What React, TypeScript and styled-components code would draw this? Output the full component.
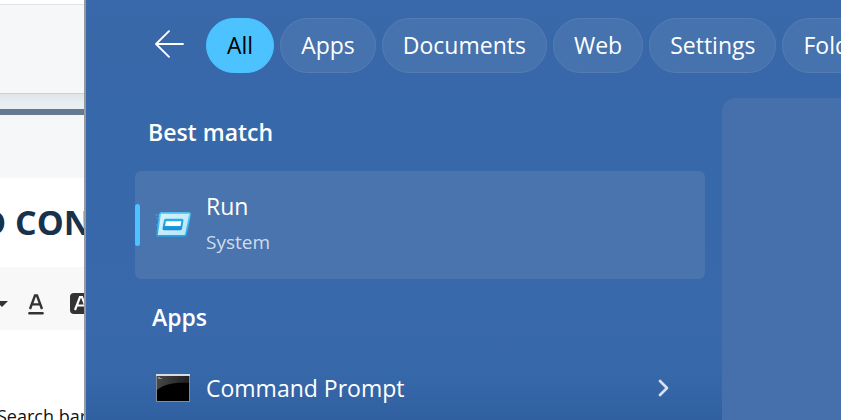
import React from "react";
import styled, { createGlobalStyle } from "styled-components";

const GlobalStyle = createGlobalStyle`
  * { box-sizing: border-box; }
  html, body, #root { height: 100%; }
  body {
    margin: 0;
    overflow: hidden;
    background: #fff;
    font-family: "Open Sans", "Noto Sans", sans-serif;
  }
  button { font: inherit; color: inherit; border: 0; background: none; padding: 0; }
  h1, h2, p { margin: 0; }
`;

const Screen = styled.div`
  display: grid;
  grid-template-columns: 86px minmax(0, 1fr);
  height: 100%;
  min-height: 420px;
  overflow: hidden;
`;

const Page = styled.main`
  display: flex;
  flex-direction: column;
  overflow: hidden;
  border-right: 2px solid #949a9e;
  background: #fff;
  white-space: nowrap;
`;

const PageHeader = styled.div`
  flex: none;
  height: 90px;
  margin-top: 4px;
  border-top: 1px solid #dde3e9;
  border-bottom: 1px solid #cbd3da;
  background: #f5f7f9;
`;

const Divider = styled.div`
  flex: none;
  height: 21px;
  border-bottom: 6px solid #637a90;
  background: linear-gradient(#dfe4e9, #e9eef3 60%);
`;

const PageBand = styled.div`
  flex: none;
  height: 63px;
  background: #f5f7f9;
`;

const PageTitle = styled.h1`
  flex: none;
  padding: 20px 0;
  margin-left: -19px;
  color: #17324a;
  font-size: 34px;
  line-height: 49px;
  font-weight: 700;
`;

const Toolbar = styled.div`
  display: flex;
  flex: none;
  align-items: center;
  gap: 20px;
  height: 63px;
  padding-top: 10px;
  background: #f8f8f8;
`;

const ToolButton = styled.button<{ $width: number }>`
  display: flex;
  flex: none;
  width: ${(p) => p.$width}px;
`;

const PageText = styled.p`
  padding-top: 71px;
  margin-left: -3px;
  color: #111;
  font-size: 18px;
  line-height: 30px;
`;

const SearchPanel = styled.section`
  display: flex;
  flex-direction: column;
  gap: 25px;
  min-width: 0;
  padding-top: 18px;
  overflow: hidden;
  color: #fff;
  background: linear-gradient(#3a68aa, #3768a9 35%, #3969aa 78%, #3667a9 90%, #3060a0);
`;

const FilterBar = styled.nav`
  display: flex;
  flex: none;
  align-items: center;
  gap: 6px;
  padding-left: 68px;
`;

const BackButton = styled.button`
  display: flex;
  margin-right: 15px;
  padding-bottom: 3px;
`;

const Filter = styled.button<{ $active?: boolean }>`
  flex: none;
  height: 55px;
  padding: 0 20px 2px;
  border: 1px solid ${(p) => (p.$active ? "#4cc2ff" : "#557db5")};
  border-radius: 28px;
  color: ${(p) => (p.$active ? "#000" : "#fff")};
  background: ${(p) => (p.$active ? "#4cc2ff" : "#4672ae")};
  font-size: 23px;
`;

const Columns = styled.div`
  display: flex;
  flex: 1;
  gap: 17px;
  padding-left: 49px;
`;

const Results = styled.div`
  flex: 0 0 570px;
`;

const Preview = styled.aside`
  flex: 1;
  border-radius: 14px 0 0 0;
  background: #4570ac;
`;

const GroupTitle = styled.h2<{ $inset: number }>`
  padding: 18px 0 22px ${(p) => p.$inset}px;
  font-size: 23px;
  line-height: 33px;
  font-weight: 600;
`;

const BestMatch = styled.button`
  position: relative;
  display: flex;
  align-items: center;
  gap: 14px;
  width: 100%;
  height: 108px;
  padding: 0 0 2px 20px;
  margin-bottom: 4px;
  border-radius: 6px;
  background: #4974ae;
  text-align: left;

  &::before {
    content: "";
    position: absolute;
    left: 0;
    top: 33px;
    width: 5px;
    height: 42px;
    border-radius: 3px;
    background: #4cc2ff;
  }
`;

const ResultTitle = styled.span`
  display: block;
  font-size: 23px;
  line-height: 36px;
`;

const ResultKind = styled.span`
  display: block;
  color: #d0dced;
  font-size: 19px;
  line-height: 36px;
`;

const ResultRow = styled.button`
  display: flex;
  align-items: center;
  gap: 14px;
  width: 100%;
  padding: 14px 35px 14px 20px;

  & > :last-child { margin-left: auto; }
`;

const RunIcon = () => (
  <svg width="37" height="32" viewBox="0 0 37 32" aria-hidden="true">
    <defs>
      <linearGradient id="frame" x1="0" y1="0" x2="1" y2="1">
        <stop offset="0" stopColor="#d8f2fb" />
        <stop offset="1" stopColor="#b5e5fb" />
      </linearGradient>
      <linearGradient id="edge" x1="0" y1="0" x2="0" y2="1">
        <stop offset="0" stopColor="#4ed6fb" />
        <stop offset="1" stopColor="#22a4ea" />
      </linearGradient>
      <linearGradient id="field" x1="0" y1="0" x2="0" y2="1">
        <stop offset="0" stopColor="#27b1e9" />
        <stop offset="1" stopColor="#128fd8" />
      </linearGradient>
    </defs>
    <path d="M0 7h8M1 10h6M1 17h4" stroke="#39a7df" strokeWidth="1.4" opacity=".6" />
    <path d="M6.3 5.2H34a1 1 0 0 1 1 1.2l-4 20a1.6 1.6 0 0 1-1.5 1.4H3a1 1 0 0 1-1-1.2l3-20a1.5 1.5 0 0 1 1.3-1.4Z" fill="url(#frame)" stroke="url(#edge)" strokeWidth="1.7" />
    <path d="M10.7 10.8H27a1.5 1.5 0 0 1 1.5 1.7L27 20.8a1.8 1.8 0 0 1-1.7 1.4H9a1.5 1.5 0 0 1-1.5-1.7l1.5-8.3a1.8 1.8 0 0 1 1.7-1.4Z" fill="url(#field)" />
    <path d="M10.9 13.3h15.4l-.8 4.8H10.1Z" fill="#fff" />
  </svg>
);

const ConsoleIcon = () => (
  <svg width="37" height="30" viewBox="0 0 37 30" aria-hidden="true">
    <defs>
      <linearGradient id="gloss" x1="0" y1="0" x2="1" y2="0">
        <stop offset="0" stopColor="#474747" />
        <stop offset="1" stopColor="#202020" />
      </linearGradient>
    </defs>
    <path d="M1 1h34v28H1Z" fill="#858b94" />
    <path d="M1 1h34v2H1Z" fill="#d9dbe4" />
    <path d="M2 3h32v25H2Z" fill="#000" />
    <path d="M2 3h32v7C20 9 9 11 2 17Z" fill="url(#gloss)" />
    <path d="M3 4.5h2M3 5.5h3M6 5.5h1" stroke="#aaa" strokeWidth=".7" />
  </svg>
);

const FILTERS = ["All", "Apps", "Documents", "Web", "Settings", "Folders"];

export default function App() {
  return (
    <>
      <GlobalStyle />
      <Screen>
        <Page>
          <PageHeader />
          <Divider />
          <PageBand />
          <PageTitle>D CON</PageTitle>
          <Toolbar>
            <ToolButton $width={8} aria-label="More styles">
              <svg width="8" height="6" viewBox="0 0 8 6"><path d="M-4 0H8L2 6Z" fill="#333" /></svg>
            </ToolButton>
            <ToolButton $width={16} aria-label="Text color">
              <svg width="16" height="22" viewBox="0 0 16 22" fill="none" stroke="#333">
                <path d="M2 16 7 2.5h2L14 16M4 11.4h8" strokeWidth="2.4" />
                <path d="M1.5 20.3h13" strokeWidth="2.6" strokeLinecap="round" />
              </svg>
            </ToolButton>
            <ToolButton $width={20} aria-label="Highlight color">
              <svg width="20" height="21" viewBox="0 0 20 21">
                <rect width="24" height="21" rx="4" x="6" fill="#333" />
                <path d="M11 17 16 4h2l5 13M13 12.5h8" fill="none" stroke="#fff" strokeWidth="2.2" />
              </svg>
            </ToolButton>
          </Toolbar>
          <PageText>Search bar</PageText>
        </Page>
        <SearchPanel aria-label="Search">
          <FilterBar>
            <BackButton aria-label="Back">
              <svg width="31" height="28" viewBox="0 0 31 28" fill="none" stroke="#fff" strokeWidth="1.8" strokeLinecap="round" strokeLinejoin="round">
                <path d="M29 14H2M15 1.2 2 14l13 12.8" />
              </svg>
            </BackButton>
            {FILTERS.map((name) => (
              <Filter key={name} $active={name === "All"}>{name}</Filter>
            ))}
          </FilterBar>
          <Columns>
            <Results>
              <GroupTitle $inset={13}>Best match</GroupTitle>
              <BestMatch>
                <RunIcon />
                <span>
                  <ResultTitle>Run</ResultTitle>
                  <ResultKind>System</ResultKind>
                </span>
              </BestMatch>
              <GroupTitle $inset={17}>Apps</GroupTitle>
              <ResultRow>
                <ConsoleIcon />
                <ResultTitle>Command Prompt</ResultTitle>
                <svg width="13" height="18" viewBox="0 0 13 18" fill="none" stroke="#d6e0ee" strokeWidth="2.7" strokeLinecap="round" strokeLinejoin="round" aria-hidden="true">
                  <path d="m3 2 7 7-7 7" />
                </svg>
              </ResultRow>
            </Results>
            <Preview />
          </Columns>
        </SearchPanel>
      </Screen>
    </>
  );
}
